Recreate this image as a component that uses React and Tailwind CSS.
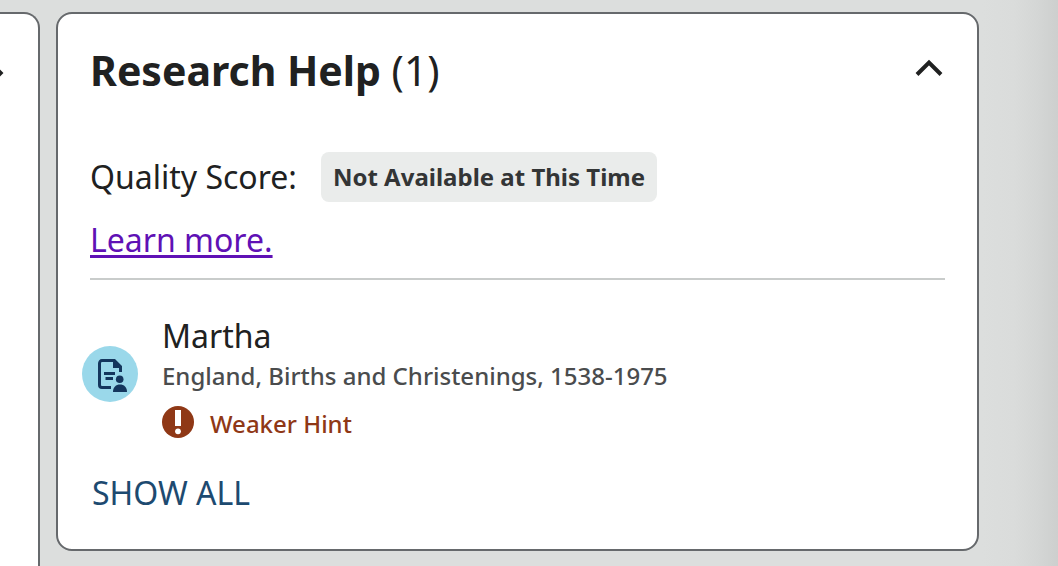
const hints = [
  {
    name: "Martha",
    collection: "England, Births and Christenings, 1538-1975",
    strength: "Weaker Hint"
  }
];

function ChevronUp() {
  return (
    <svg className="w-7 h-5" viewBox="0 0 28 20" fill="none" aria-hidden="true">
      <path d="M2 16.5L14 4.5L26 16.5" stroke="#202121" strokeWidth="4" />
    </svg>
  );
}

function ChevronTip() {
  return (
    <svg className="w-1 h-5" viewBox="0 0 4 20" fill="none" aria-hidden="true">
      <path d="M-11 -2L1 10L-11 22" stroke="#202121" strokeWidth="3.5" />
    </svg>
  );
}

function RecordIcon() {
  return (
    <svg className="w-14 h-14 shrink-0" viewBox="0 0 56 56" fill="none" aria-hidden="true">
      <circle cx="28" cy="28" r="28" fill="#9ad8ea" />
      <path
        d="M29 41.5H20C18.5 41.5 17.5 40.5 17.5 39V17.5C17.5 15.8 18.5 14.5 20 14.5H32"
        stroke="#14365d"
        strokeWidth="3"
      />
      <path d="M31 13H33L40 20V26H37V22H31V13Z" fill="#14365d" />
      <path d="M22 26H33V29H22V26ZM23.5 31H31V34H23.5V31Z" fill="#14365d" />
      <circle cx="37.7" cy="33.2" r="3.8" fill="#14365d" />
      <path d="M31 46C31 41 34 38.5 38 38.5C42 38.5 45 41 45 46H31Z" fill="#14365d" />
    </svg>
  );
}

function AlertIcon() {
  return (
    <svg className="w-8 h-8 shrink-0" viewBox="0 0 32 32" aria-hidden="true">
      <circle cx="16" cy="16" r="16" fill="#8f3816" />
      <rect x="13" y="4" width="6" height="16" fill="#fff" />
      <circle cx="16" cy="25.3" r="2.9" fill="#fff" />
    </svg>
  );
}

export default function App() {
  return (
    <main className="flex min-h-screen overflow-hidden pt-3 pr-[79px] bg-[#dcdedd] bg-[linear-gradient(to_left,#cdcfce_0px,#d4d6d5_20px,#dadcdb_44px,#dcdedd_76px)] font-['Noto_Sans',sans-serif] text-[#202121]">

      <section className="w-10 shrink-0 rounded-tr-2xl border-t-2 border-r-2 border-[#66696c] bg-white pt-[49px]">
        <button type="button" aria-label="Expand" className="block">
          <ChevronTip />
        </button>
      </section>

      <section className="ml-4 mb-[15px] min-w-0 flex-1 self-start rounded-2xl border-2 border-[#66696c] bg-white px-8 pt-7 pb-9">

        <div className="flex items-start justify-between">
          <h2 className="text-[41px] leading-14 font-bold">
            Research Help <span className="font-normal">(1)</span>
          </h2>
          <button type="button" aria-label="Collapse" className="mt-4 mr-0.5 block">
            <ChevronUp />
          </button>
        </div>

        <div className="mt-[54px] flex items-center gap-6 text-[32px] leading-10">
          <span>Quality Score:</span>
          <span className="rounded-lg bg-[#eaeceb] px-3 text-2xl leading-[50px] font-bold text-[#333536]">
            Not Available at This Time
          </span>
        </div>

        <p className="mt-[18px] text-[32px] leading-10">
          <a href="#learn" className="text-[#5f11b5] underline decoration-3 underline-offset-3">
            Learn more.
          </a>
        </p>

        <hr className="mt-[18px] border-t-2 border-[#c9cccb]" />

        <ul className="mt-9">
          {hints.map((hint, index) => (
            <li key={index} className="-ml-2 flex items-start gap-6">
              <div className="pt-[30px]">
                <RecordIcon />
              </div>
              <div>
                <h3 className="text-[32px] leading-10">{hint.name}</h3>
                <p className="text-2xl leading-10 font-medium text-[#4a4c4d]">{hint.collection}</p>
                <p className="mt-2 flex items-start gap-4 text-2xl leading-10 font-medium text-[#8f3816]">
                  <span className="pt-0.5">
                    <AlertIcon />
                  </span>
                  {hint.strength}
                </p>
              </div>
            </li>
          ))}
        </ul>

        <button type="button" className="mt-[29px] block pl-0.5 text-[32px] leading-10 text-[#1d4a70]">
          SHOW ALL
        </button>

      </section>

    </main>
  );
}
